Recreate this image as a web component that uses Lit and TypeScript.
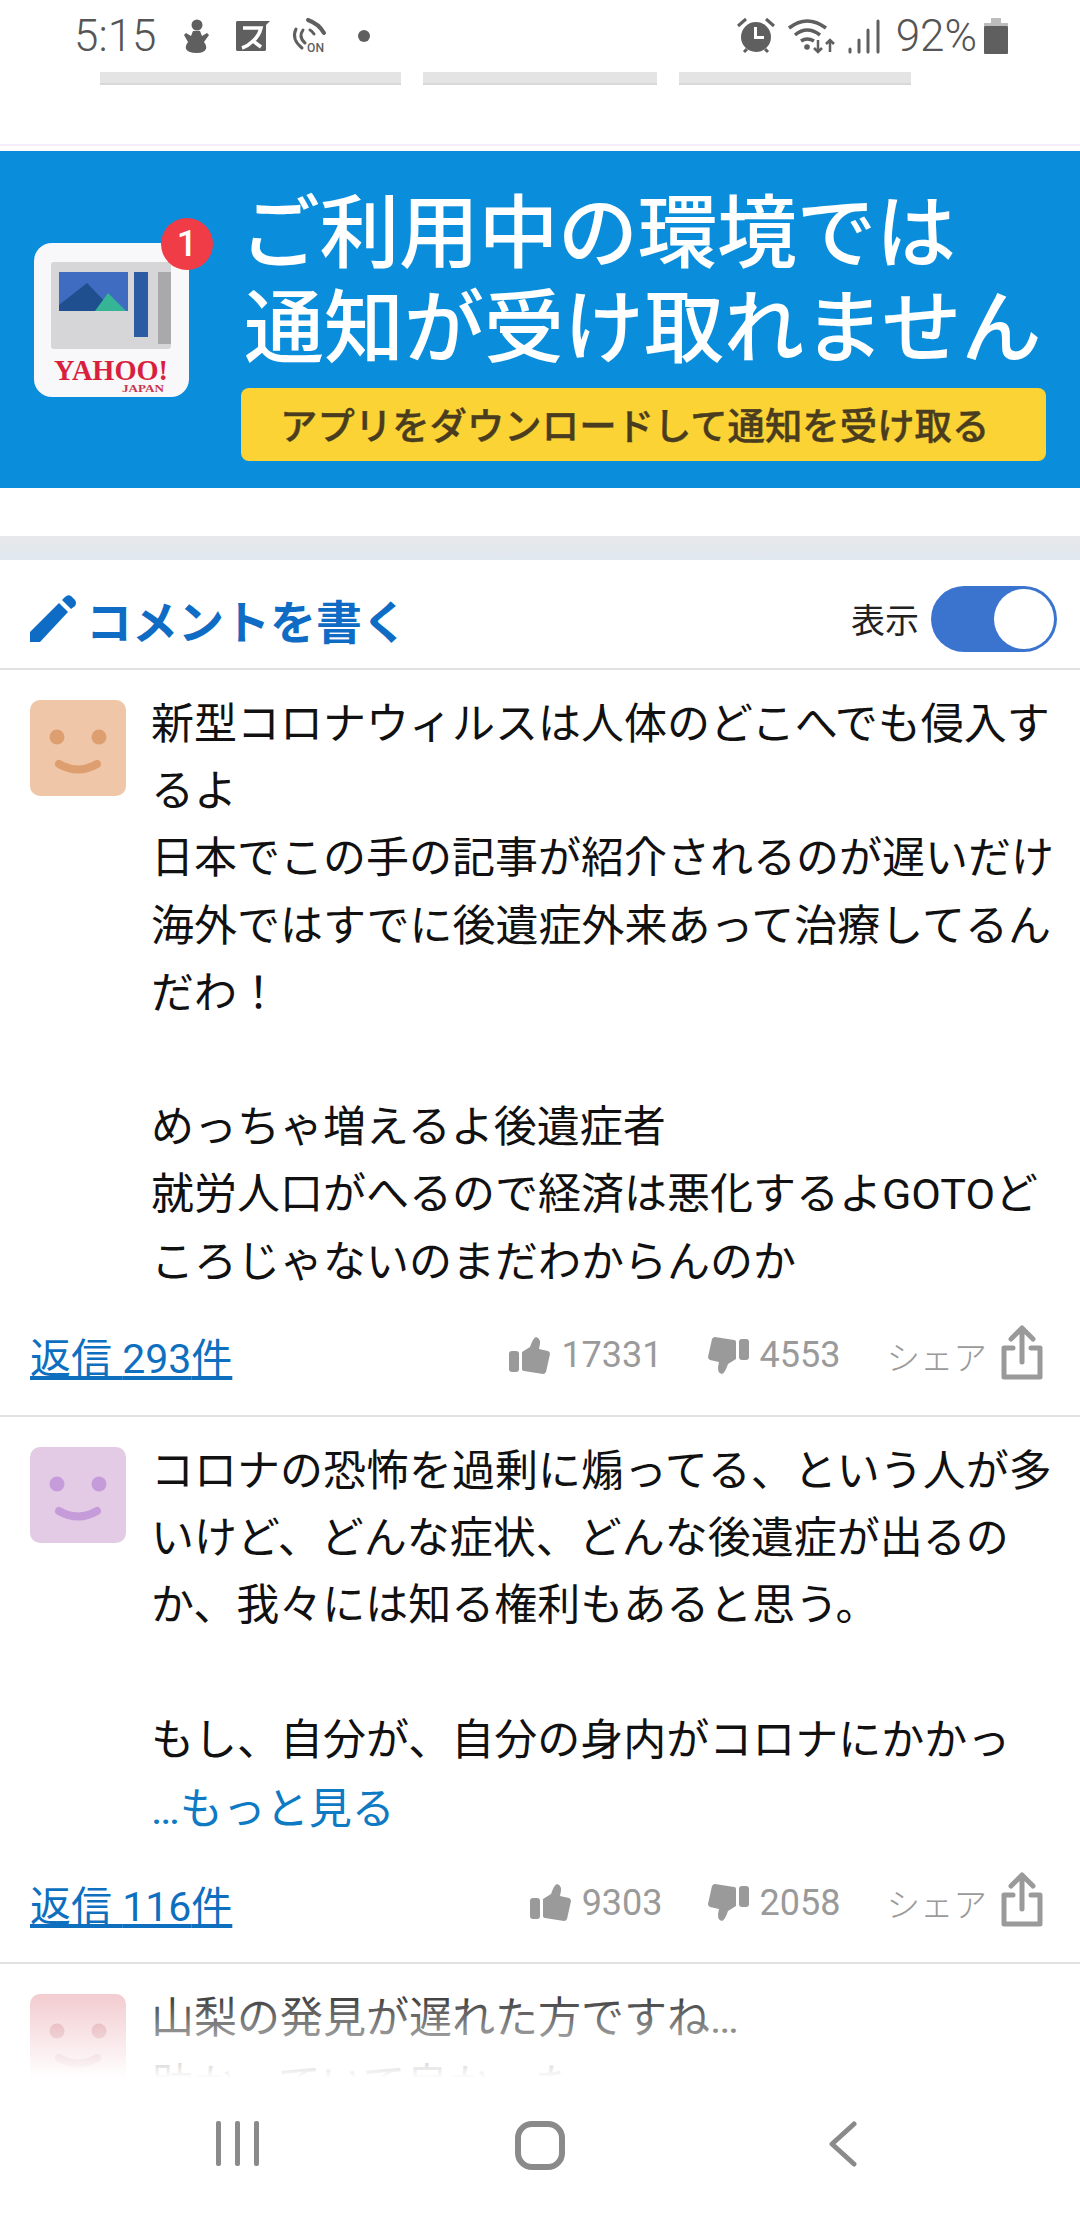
import { LitElement, css, html } from "lit";
import { customElement } from "lit/decorators.js";

interface Comment {
  text: string;
  more?: boolean;
  replies?: number;
  likes?: number;
  dislikes?: number;
  bg: string;
  face: string;
}

const comments: Comment[] = [
  {
    text: "新型コロナウィルスは人体のどこへでも侵入す\nるよ\n日本でこの手の記事が紹介されるのが遅いだけ\n海外ではすでに後遺症外来あって治療してるん\nだわ！\n\nめっちゃ増えるよ後遺症者\n就労人口がへるので経済は悪化するよGOTOど\nころじゃないのまだわからんのか",
    replies: 293,
    likes: 17331,
    dislikes: 4553,
    bg: "#f0c6a8",
    face: "#dd9f6f",
  },
  {
    text: "コロナの恐怖を過剰に煽ってる、という人が多\nいけど、どんな症状、どんな後遺症が出るの\nか、我々には知る権利もあると思う。\n\nもし、自分が、自分の身内がコロナにかかっ",
    more: true,
    replies: 116,
    likes: 9303,
    dislikes: 2058,
    bg: "#e3cbe6",
    face: "#c59bd9",
  },
  {
    text: "山梨の発見が遅れた方ですね…\n助かっていて良かった",
    bg: "#f0c2c7",
    face: "#d98c96",
  },
];

const smiley = (c: Comment) => html`
  <svg class="avatar" viewBox="0 0 96 96">
    <rect width="96" height="96" rx="10" fill=${c.bg}></rect>
    <circle cx="27" cy="37" r="7.5" fill=${c.face}></circle>
    <circle cx="69" cy="37" r="7.5" fill=${c.face}></circle>
    <path d="M29 64q19 11 38 0" fill="none" stroke=${c.face} stroke-width="8" stroke-linecap="round"></path>
  </svg>
`;

const thumb = html`
  <svg class="thumb" viewBox="0 0 41 37">
    <rect x="0" y="14" width="10" height="21" rx="3" fill="#9a9a9a"></rect>
    <path d="M13 15 21 10Q24 1 27 0 33 1 30 12L39 14Q41 15 41 17L37 35Q36 37 34 37L15 34Q13 34 13 32Z" fill="#9a9a9a"></path>
  </svg>
`;

const thumbDown = html`
  <svg class="thumb" viewBox="0 0 41 37">
    <g transform="rotate(180 20.5 18.5)">
      <rect x="0" y="14" width="10" height="21" rx="3" fill="#9a9a9a"></rect>
      <path d="M13 15 21 10Q24 1 27 0 33 1 30 12L39 14Q41 15 41 17L37 35Q36 37 34 37L15 34Q13 34 13 32Z" fill="#9a9a9a"></path>
    </g>
  </svg>
`;

const share = html`
  <svg class="share" viewBox="0 0 42 55" fill="none" stroke="#9a9a9a" stroke-width="5" stroke-linejoin="round" stroke-linecap="round">
    <path d="M21 4V37M10 14 21 3 32 14"></path>
    <path d="M12 23H3V52H39V23H30"></path>
  </svg>
`;

@customElement("app-root")
export class AppRoot extends LitElement {
  static styles = css`
    :host {
      display: flex;
      flex-direction: column;
      width: 1080px;
      height: 2220px;
      overflow: hidden;
      background: #fff;
      color: #111;
      font-family: Roboto, "Noto Sans CJK JP", sans-serif;
    }

    .status {
      height: 72px;
      flex: none;
      display: flex;
      align-items: center;
      padding: 0 72px 0 74px;
      box-sizing: border-box;
      color: #555;
      font-size: 44px;
      font-weight: 300;
    }
    .status svg {
      flex: none;
      fill: #5f5f5f;
      overflow: visible;
    }
    .spacer {
      flex: 1;
    }

    .strips {
      flex: none;
      display: flex;
      gap: 22px;
      padding-left: 100px;
      height: 74px;
      border-bottom: 2px solid #f5edfb;
      box-sizing: border-box;
    }
    .strip {
      height: 13px;
      background: #e4e4e4;
      border-bottom: 2px solid #d8d8d8;
      box-sizing: border-box;
    }

    .banner {
      flex: none;
      margin-top: 5px;
      height: 337px;
      background: #0a8ddb;
      display: flex;
      padding-left: 34px;
      box-sizing: border-box;
    }
    .app-icon {
      position: relative;
      flex: none;
      width: 155px;
      height: 154px;
      margin-top: 92px;
      margin-right: 52px;
    }
    .app-icon svg {
      display: block;
    }
    .badge {
      position: absolute;
      right: -24px;
      top: -25px;
      width: 52px;
      height: 52px;
      border-radius: 50%;
      background: #f03c46;
      color: #fff;
      font-size: 36px;
      font-weight: 500;
      text-align: center;
      line-height: 52px;
    }
    .banner-body {
      padding-top: 28px;
    }
    .banner-title {
      color: #fff;
      font-family: "Noto Sans CJK JP", sans-serif;
      font-size: 80px;
      font-weight: 500;
      line-height: 95px;
      padding-left: 3px;
      text-indent: -4px;
      white-space: pre;
    }
    .banner-title::first-line {
      letter-spacing: -0.5px;
    }
    .banner-btn {
      margin-top: 19px;
      width: 805px;
      height: 73px;
      background: #fbd334;
      border-radius: 8px;
      color: #4a3d1f;
      font-family: "Noto Sans CJK JP", sans-serif;
      font-size: 37.4px;
      font-weight: 500;
      -webkit-text-stroke: 0.4px #4a3d1f;
      line-height: 73px;
      padding-left: 39px;
      box-sizing: border-box;
    }

    .band {
      flex: none;
      margin-top: 48px;
      height: 24px;
      background: linear-gradient(#e6e8ea, #e1e8ef);
    }

    .write {
      flex: none;
      height: 110px;
      display: flex;
      align-items: center;
      padding: 9px 23px 0 30px;
      border-bottom: 2px solid #e2e2e2;
      box-sizing: border-box;
    }
    .write svg {
      flex: none;
      margin-right: 10px;
    }
    .write-title {
      color: #0f6cc4;
      font-family: "Noto Sans CJK JP", sans-serif;
      font-size: 46px;
      font-weight: 700;
      flex: 1;
    }
    .toggle-label {
      font-family: "Noto Sans CJK JP", sans-serif;
      font-size: 34px;
      color: #222;
      margin-right: 12px;
    }
    .toggle {
      position: relative;
      width: 126px;
      height: 66px;
      border-radius: 33px;
      background: #3b74cf;
    }
    .knob {
      position: absolute;
      right: 3px;
      top: 3px;
      width: 60px;
      height: 60px;
      border-radius: 50%;
      background: #fff;
    }

    .list {
      position: relative;
      flex: 1;
      overflow: hidden;
      min-height: 0;
    }
    .list::after {
      content: "";
      position: absolute;
      left: 0;
      right: 0;
      bottom: 0;
      height: 100px;
      background: linear-gradient(rgba(255, 255, 255, 0), #fff);
    }
    .comment {
      padding: 18px 0 0 30px;
      border-bottom: 2px solid #e2e2e2;
    }
    .comment:last-child {
      border-bottom: 0;
    }
    .main {
      display: flex;
      align-items: flex-start;
    }
    .avatar {
      flex: none;
      width: 96px;
      height: 96px;
      margin: 12px 25px 0 0;
    }
    .text {
      padding-top: 3px;
      font-size: 43px;
      line-height: 67.2px;
      white-space: pre;
    }
    .more {
      display: block;
      margin-top: 2px;
      color: #0e7ac4;
    }
    .meta {
      display: flex;
      align-items: center;
      height: 119px;
      padding-right: 37px;
      color: #9a9a9a;
      font-size: 36px;
    }
    .reply {
      flex: 1;
      color: #0e6fbf;
      font-size: 41px;
      text-decoration: underline;
    }
    .count {
      margin: 0 46px 0 11px;
    }
    .count.up {
      margin-right: 45px;
    }
    .thumb {
      width: 41px;
      height: 37px;
      flex: none;
    }
    .share-label {
      font-size: 33.5px;
      font-family: "Noto Sans CJK JP", sans-serif;
      font-weight: 300;
    }
    .share {
      width: 42px;
      height: 55px;
      flex: none;
      margin: -6px 0 0 14px;
    }

    .nav {
      flex: none;
      height: 142px;
      background: #fff;
      display: flex;
      justify-content: center;
      align-items: flex-start;
      padding-top: 43px;
      box-sizing: border-box;
    }
    .nav-item {
      width: 303px;
      display: flex;
      justify-content: center;
    }
  `;

  private renderComment(c: Comment) {
    return html`
      <div class="comment">
        <div class="main">
          ${smiley(c)}
          <div class="text">${c.text}${c.more ? html`<span class="more">…もっと見る</span>` : ""}</div>
        </div>
        ${c.replies
          ? html`
              <div class="meta">
                <span class="reply">返信 ${c.replies}件</span>
                ${thumb}<span class="count up">${c.likes}</span>
                ${thumbDown}<span class="count">${c.dislikes}</span>
                <span class="share-label">シェア</span>${share}
              </div>
            `
          : ""}
      </div>
    `;
  }

  render() {
    return html`
      <div class="status">
        <span>5:15</span>
        <svg width="28" height="34" viewBox="0 0 28 34" style="margin-left:26px">
          <circle cx="15" cy="6" r="5.5"></circle>
          <path d="M11 12h7l2 5 5-3 2 2-5 7q3 4 2 7-2 4-9 4-9 0-11-4-1-3 2-7L2 16l2-2 5 3z"></path>
        </svg>
        <svg width="34" height="30" viewBox="0 0 34 30" style="margin-left:26px">
          <path d="M1 0H34L30 4V29L29 30H1L0 29V1Z"></path>
          <path d="M7 7H25Q23 15 17 20L25 26M17 20Q12 25 6 27" fill="none" stroke="#fff" stroke-width="3.5"></path>
        </svg>
        <svg width="34" height="34" viewBox="0 0 34 34" style="margin-left:21px">
          <g fill="none" stroke="#5f5f5f" stroke-linecap="round">
            <path d="M17 1Q28 5 33 14" stroke-width="4"></path>
            <path d="M5 10Q0 20 11 29" stroke-width="3"></path>
            <path d="M12 11Q7 18 14 24" stroke-width="3"></path>
            <path d="M19 11Q21 12 23 15" stroke-width="3"></path>
          </g>
          <text x="16" y="33" font-size="12" font-family="Roboto" font-weight="500" textLength="17" lengthAdjust="spacingAndGlyphs">ON</text>
        </svg>
        <svg width="12" height="12" viewBox="0 0 12 12" style="margin-left:33px">
          <circle cx="6" cy="6" r="6"></circle>
        </svg>
        <span class="spacer"></span>
        <svg width="38" height="36" viewBox="0 0 38 36">
          <path d="M1 8 9 1M37 8 29 1M7 34l3-3M31 34l-3-3" stroke="#5f5f5f" stroke-width="3" fill="none"></path>
          <circle cx="19" cy="19" r="15"></circle>
          <path d="M17 9v12h10v-3h-7V9z" fill="#fff"></path>
        </svg>
        <svg width="48" height="36" viewBox="0 0 48 36" style="margin-left:13px">
          <g fill="none" stroke="#5f5f5f" stroke-width="3.5">
            <path d="M1 10Q19-4 38 10"></path>
            <path d="M7 17Q19 7 32 17"></path>
            <path d="M13 23Q19 19 26 23"></path>
          </g>
          <circle cx="19" cy="29" r="2.8"></circle>
          <path d="M30 22v12M26 30l4 4 4-4M42 34V22M38 26l4-4 4 4" fill="none" stroke="#5f5f5f" stroke-width="2.5"></path>
        </svg>
        <svg width="32" height="34" viewBox="0 0 32 34" style="margin-left:12px">
          <g fill="none" stroke="#5f5f5f" stroke-width="3" stroke-linecap="round">
            <path d="M2 33v-3M11 33V21M20 33V11M30 33V2"></path>
          </g>
        </svg>
        <span style="margin-left:16px">92%</span>
        <svg width="24" height="36" viewBox="0 0 24 36" style="margin-left:7px">
          <path d="M7 0H17V5H24V8H0V5H7Z" fill="#bdbdbd"></path>
          <rect y="8" width="24" height="28" rx="1"></rect>
        </svg>
      </div>

      <div class="strips">
        ${[301, 234, 232].map((w) => html`<div class="strip" style="width:${w}px"></div>`)}
      </div>

      <div class="banner">
        <div class="app-icon">
          <svg width="155" height="154" viewBox="0 0 155 154">
            <rect width="155" height="154" rx="18" fill="#f8f7f9"></rect>
            <rect x="17" y="19" width="120" height="87" rx="3" fill="#d6d6d8"></rect>
            <rect x="25" y="29" width="69" height="39" fill="#3f6cc0"></rect>
            <path d="M25 68V62L53 40 80 68Z" fill="#1f4f8f"></path>
            <path d="M61 68 74 50 92 68Z" fill="#35b596"></path>
            <rect x="100" y="29" width="14" height="65" fill="#2b5ca3"></rect>
            <rect x="124" y="29" width="13" height="72" fill="#a9a9ab"></rect>
            ${[28, 39, 50, 61, 72, 83].map(
              (x) => html`<rect x=${x} y="74" width="6" height="21" fill="#9c9c9e"></rect>`
            )}
            <text x="20" y="137" font-family="Liberation Serif" font-size="30" font-weight="700" fill="#d91f3e" textLength="114" lengthAdjust="spacingAndGlyphs">YAHOO!</text>
            <text x="88" y="149" font-family="Liberation Serif" font-size="11" font-weight="700" fill="#c9364d" textLength="42" lengthAdjust="spacingAndGlyphs">JAPAN</text>
          </svg>
          <div class="badge">1</div>
        </div>
        <div class="banner-body">
          <div class="banner-title">ご利用中の環境では
通知が受け取れません</div>
          <div class="banner-btn">アプリをダウンロードして通知を受け取る</div>
        </div>
      </div>

      <div class="band"></div>

      <div class="write">
        <svg width="46" height="47" viewBox="0 0 46 47" fill="#0f6cc4">
          <path d="M0 47V37L29 8 38 17 10 47Z"></path>
          <path d="M32 5 35 2Q38-1 41 1L45 5Q47 8 45 11L41 14Z"></path>
        </svg>
        <span class="write-title">コメントを書く</span>
        <span class="toggle-label">表示</span>
        <div class="toggle"><div class="knob"></div></div>
      </div>

      <div class="list">${comments.map((c) => this.renderComment(c))}</div>

      <div class="nav">
        <div class="nav-item">
          <svg width="43" height="45" viewBox="0 0 43 45" fill="#8a8a8a">
            <rect x="0" width="5" height="45" rx="2"></rect>
            <rect x="19" width="5" height="45" rx="2"></rect>
            <rect x="38" width="5" height="45" rx="2"></rect>
          </svg>
        </div>
        <div class="nav-item">
          <svg width="50" height="49" viewBox="0 0 50 49" fill="none" stroke="#8a8a8a" stroke-width="6">
            <rect x="3" y="3" width="44" height="43" rx="14"></rect>
          </svg>
        </div>
        <div class="nav-item">
          <svg width="28" height="46" viewBox="0 0 28 46" fill="none" stroke="#8a8a8a" stroke-width="5" stroke-linecap="round" stroke-linejoin="round">
            <path d="M25 3 3 23 25 43"></path>
          </svg>
        </div>
      </div>
    `;
  }
}
